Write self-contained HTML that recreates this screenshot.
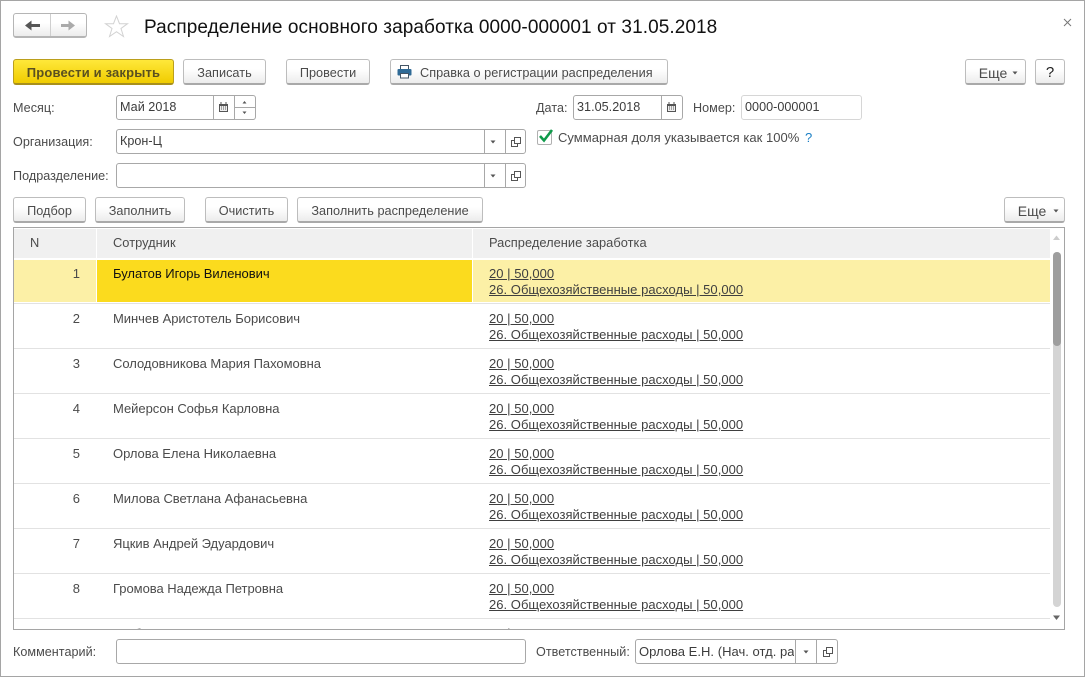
<!DOCTYPE html>
<html lang="ru"><head><meta charset="utf-8"><title>Распределение</title>
<style>
*{box-sizing:border-box}
html,body{margin:0;padding:0;background:#fff}
body{width:1085px;height:677px;position:relative;overflow:hidden;font-family:"Liberation Sans",Arial,sans-serif;font-size:13px;letter-spacing:.03px;color:#4b4b4b}
.win{position:absolute;left:0;top:0;width:1085px;height:677px;border:1px solid #a5a5a5}
.a{position:absolute;white-space:nowrap}
.btn{position:absolute;height:26px;border:1px solid #bdbdbd;border-bottom:2px solid #a9a9a9;border-radius:3px;background:linear-gradient(#fff 40%,#ececec);text-align:center;line-height:26px;font-size:12.7px;color:#4b4b4b;white-space:nowrap}
.y{background:linear-gradient(#ffe83a,#f0cc00);border:1px solid #bb9f1c;border-bottom:2px solid #a8901c;font-weight:bold;font-size:13px;color:#5a5020;letter-spacing:.17px}
.f{position:absolute;height:25px;border:1px solid #a8a8a8;border-radius:3px;background:#fff;line-height:23px;padding-left:3px;font-size:12.6px;color:#3c3c3c;white-space:nowrap;overflow:hidden}
.sep{position:absolute;top:0;bottom:0;width:1px;background:#a8a8a8}
.l{position:absolute;white-space:nowrap;line-height:14px;font-size:12.6px;color:#4b4b4b}
.h{font-size:12.85px}
.tbl{position:absolute;left:13px;top:227px;width:1052px;height:403px;border:1px solid #a5a5a5;overflow:hidden;background:#fff}
.row{position:absolute;left:0;width:1036px;height:45px;border-bottom:1px solid #e2e2e2}
.n{position:absolute;left:0;width:66px;text-align:right;top:8px;line-height:14px}
.s{position:absolute;left:99px;top:8px;line-height:14px;white-space:nowrap;letter-spacing:-.03px}
.d{position:absolute;left:475px;top:7px;line-height:16px;white-space:nowrap;color:#3f3f3f;text-decoration:underline}
</style></head><body>
<div class="win"></div>

<!-- nav -->
<div class="btn" style="left:13px;top:13px;width:74px;height:25px;border-color:#b5b5b5"></div>
<div class="a" style="left:50px;top:14px;width:1px;height:22px;background:#cfcfcf"></div>
<svg class="a" style="left:24px;top:18px" width="18" height="15"><path d="M1 7.500L7.500 2.500V6H16V9H7.500V12.500Z" fill="#555"/></svg>
<svg class="a" style="left:60px;top:18px" width="18" height="15"><path d="M15 7.500L8.500 2.500V6H1V9H8.500V12.500Z" fill="#aaa"/></svg>
<svg class="a" style="left:104px;top:15px" width="26" height="23"><path d="M12.500 1L15.500 8.700H23.500L17 13.500L19.500 21.500L12.500 16.700L5.500 21.500L8 13.500L1.500 8.700H9.500Z" fill="#fff" stroke="#d2d2d2" stroke-width="1"/></svg>
<div class="a" style="left:144px;top:16px;font-size:19px;line-height:24px;color:#111;letter-spacing:.08px">Распределение основного заработка 0000-000001 от 31.05.2018</div>
<svg class="a" style="left:1063px;top:18px" width="9" height="9"><path d="M1 1L8 8M8 1L1 8" stroke="#777" stroke-width="1" fill="none"/></svg>

<!-- command bar -->
<div class="btn y" style="left:13px;top:59px;width:161px">Провести и закрыть</div>
<div class="btn" style="left:183px;top:59px;width:83px">Записать</div>
<div class="btn" style="left:286px;top:59px;width:84px">Провести</div>
<div class="btn" style="left:390px;top:59px;width:278px;text-align:left;padding-left:29px">Справка о регистрации распределения</div>
<svg class="a" style="left:397px;top:65px" width="16" height="14"><rect x="3.500" y="0.500" width="8" height="4" fill="#fff" stroke="#456"/><rect x="0.500" y="4" width="14" height="6.500" rx="1" fill="#2f6a96"/><rect x="3.500" y="8.500" width="8" height="4.500" fill="#fff" stroke="#456"/></svg>
<div class="btn" style="left:965px;top:59px;width:61px;padding-right:5px;font-size:14px">Еще</div>
<svg class="a" style="left:1012px;top:71px" width="7" height="4"><path d="M0.500 0.500H5.500L3 3.500Z" fill="#555"/></svg>
<div class="btn" style="left:1035px;top:59px;width:30px;color:#222;font-size:15px">?</div>

<!-- fields -->
<div class="l" style="left:13px;top:101px">Месяц:</div>
<div class="f" style="left:116px;top:95px;width:140px">Май 2018
  <div class="sep" style="left:96px"></div><div class="sep" style="left:117px"></div>
  <div style="position:absolute;left:118px;top:11px;width:21px;height:1px;background:#a8a8a8"></div>
</div>
<svg class="a" style="left:219px;top:102px" width="9" height="10"><path d="M0 2H9V10H0Z" fill="#555"/><path d="M2 0V2M7 0V2" stroke="#555"/><path d="M1 4H8V9H1Z" fill="#eee"/><path d="M2 5H3M4 5H5M6 5H7M2 7H3M4 7H5M6 7H7" stroke="#555"/></svg>
<svg class="a" style="left:242px;top:100px" width="5" height="16"><path d="M0.500 3.500L2.500 1L4.500 3.500ZM0.500 11.500H4.500L2.500 14Z" fill="#555"/></svg>

<div class="l" style="left:13px;top:135px">Организация:</div>
<div class="f" style="left:116px;top:129px;width:410px">Крон-Ц
  <div class="sep" style="left:367px"></div><div class="sep" style="left:388px"></div>
</div>
<svg class="a" style="left:490px;top:140px" width="7" height="4"><path d="M0.500 0.500H5.500L3 3.500Z" fill="#555"/></svg>
<svg class="a" style="left:510px;top:136px" width="12" height="12"><path d="M4.500 1.500H10.500V7.500H4.500ZM4 4.500H1.500V10.500H7.500V8" fill="none" stroke="#555"/></svg>

<div class="l" style="left:13px;top:169px">Подразделение:</div>
<div class="f" style="left:116px;top:163px;width:410px">
  <div class="sep" style="left:367px"></div><div class="sep" style="left:388px"></div>
</div>
<svg class="a" style="left:490px;top:174px" width="7" height="4"><path d="M0.500 0.500H5.500L3 3.500Z" fill="#555"/></svg>
<svg class="a" style="left:510px;top:170px" width="12" height="12"><path d="M4.500 1.500H10.500V7.500H4.500ZM4 4.500H1.500V10.500H7.500V8" fill="none" stroke="#555"/></svg>

<div class="l" style="left:536px;top:101px">Дата:</div>
<div class="f" style="left:573px;top:95px;width:110px">31.05.2018
  <div class="sep" style="left:87px"></div>
</div>
<svg class="a" style="left:667px;top:102px" width="9" height="10"><path d="M0 2H9V10H0Z" fill="#555"/><path d="M2 0V2M7 0V2" stroke="#555"/><path d="M1 4H8V9H1Z" fill="#eee"/><path d="M2 5H3M4 5H5M6 5H7M2 7H3M4 7H5M6 7H7" stroke="#555"/></svg>
<div class="l" style="left:693px;top:101px">Номер:</div>
<div class="f" style="left:741px;top:95px;width:121px;border-color:#d6d6d6">0000-000001</div>

<div class="a" style="left:537px;top:130px;width:15px;height:15px;border:1px solid #b0b0b0;border-radius:2px"></div>
<svg class="a" style="left:538px;top:128px" width="16" height="15"><path d="M2 8L6 12.500L14 2" fill="none" stroke="#0f9a4a" stroke-width="2.600"/></svg>
<div class="l" style="left:558px;top:131px;font-size:13px">Суммарная доля указывается как 100%</div>
<div class="l" style="left:805px;top:131px;font-size:13px;color:#1b7fc4">?</div>

<!-- table bar -->
<div class="btn" style="left:13px;top:197px;width:73px">Подбор</div>
<div class="btn" style="left:95px;top:197px;width:90px">Заполнить</div>
<div class="btn" style="left:205px;top:197px;width:83px">Очистить</div>
<div class="btn" style="left:297px;top:197px;width:186px">Заполнить распределение</div>
<div class="btn" style="left:1004px;top:197px;width:61px;padding-right:5px;font-size:14px">Еще</div>
<svg class="a" style="left:1053px;top:209px" width="7" height="4"><path d="M0.500 0.500H5.500L3 3.500Z" fill="#555"/></svg>

<!-- table -->
<div class="tbl">
  <div class="a" style="left:0;top:1px;width:1036px;height:29px;background:#f0f0f0"></div>
  <div class="a" style="left:82px;top:0;width:1px;height:30px;background:#fff"></div>
  <div class="a" style="left:458px;top:0;width:1px;height:30px;background:#fff"></div>
  <div class="l h" style="left:16px;top:8px">N</div>
  <div class="l h" style="left:99px;top:8px">Сотрудник</div>
  <div class="l h" style="left:475px;top:8px">Распределение заработка</div>

  <div class="a" style="left:0;top:32px;width:1036px;height:42px;background:#fcf0a6"></div>
  <div class="a" style="left:83px;top:32px;width:375px;height:42px;background:#fbdb1e"></div>
  <div class="a" style="left:82px;top:32px;width:1px;height:42px;background:#fff"></div>
  <div class="a" style="left:458px;top:32px;width:1px;height:42px;background:#fff"></div>
  <div class="row" style="top:31px">
    <div class="n">1</div><div class="s" style="color:#111">Булатов Игорь Виленович</div><div class="d">20 | 50,000<br>26. Общехозяйственные расходы | 50,000</div>
  </div>
  <div class="row" style="top:76px"><div class="n">2</div><div class="s">Минчев Аристотель Борисович</div><div class="d">20 | 50,000<br>26. Общехозяйственные расходы | 50,000</div></div>
  <div class="row" style="top:121px"><div class="n">3</div><div class="s">Солодовникова Мария Пахомовна</div><div class="d">20 | 50,000<br>26. Общехозяйственные расходы | 50,000</div></div>
  <div class="row" style="top:166px"><div class="n">4</div><div class="s">Мейерсон Софья Карловна</div><div class="d">20 | 50,000<br>26. Общехозяйственные расходы | 50,000</div></div>
  <div class="row" style="top:211px"><div class="n">5</div><div class="s">Орлова Елена Николаевна</div><div class="d">20 | 50,000<br>26. Общехозяйственные расходы | 50,000</div></div>
  <div class="row" style="top:256px"><div class="n">6</div><div class="s">Милова Светлана Афанасьевна</div><div class="d">20 | 50,000<br>26. Общехозяйственные расходы | 50,000</div></div>
  <div class="row" style="top:301px"><div class="n">7</div><div class="s">Яцкив Андрей Эдуардович</div><div class="d">20 | 50,000<br>26. Общехозяйственные расходы | 50,000</div></div>
  <div class="row" style="top:346px"><div class="n">8</div><div class="s">Громова Надежда Петровна</div><div class="d">20 | 50,000<br>26. Общехозяйственные расходы | 50,000</div></div>
  <div class="row" style="top:391px"><div class="n">9</div><div class="s">Глебова Жанна Раисовна</div><div class="d">20 | 50,000</div></div>

  <div class="a" style="left:1039px;top:24px;width:8px;height:355px;background:#d4d4d4;border-radius:4px"></div>
  <div class="a" style="left:1039px;top:24px;width:8px;height:94px;background:#9e9e9e;border-radius:4px"></div>
  <svg class="a" style="left:1039px;top:7px" width="8" height="6"><path d="M0 5H7L3.500 0.500Z" fill="#ccc"/></svg>
  <svg class="a" style="left:1039px;top:387px" width="8" height="6"><path d="M0 0.500H7L3.500 5Z" fill="#666"/></svg>
</div>

<!-- footer -->
<div class="l" style="left:13px;top:645px">Комментарий:</div>
<div class="f" style="left:116px;top:639px;width:410px"></div>
<div class="l" style="left:536px;top:645px">Ответственный:</div>
<div class="f" style="left:635px;top:639px;width:203px;font-size:13px"><span style="display:block;width:155px;overflow:hidden">Орлова Е.Н. (Нач. отд. ра</span>
  <div class="sep" style="left:159px"></div><div class="sep" style="left:180px"></div>
</div>
<svg class="a" style="left:803px;top:650px" width="7" height="4"><path d="M0.500 0.500H5.500L3 3.500Z" fill="#555"/></svg>
<svg class="a" style="left:822px;top:646px" width="12" height="12"><path d="M4.500 1.500H10.500V7.500H4.500ZM4 4.500H1.500V10.500H7.500V8" fill="none" stroke="#555"/></svg>
</body></html>
